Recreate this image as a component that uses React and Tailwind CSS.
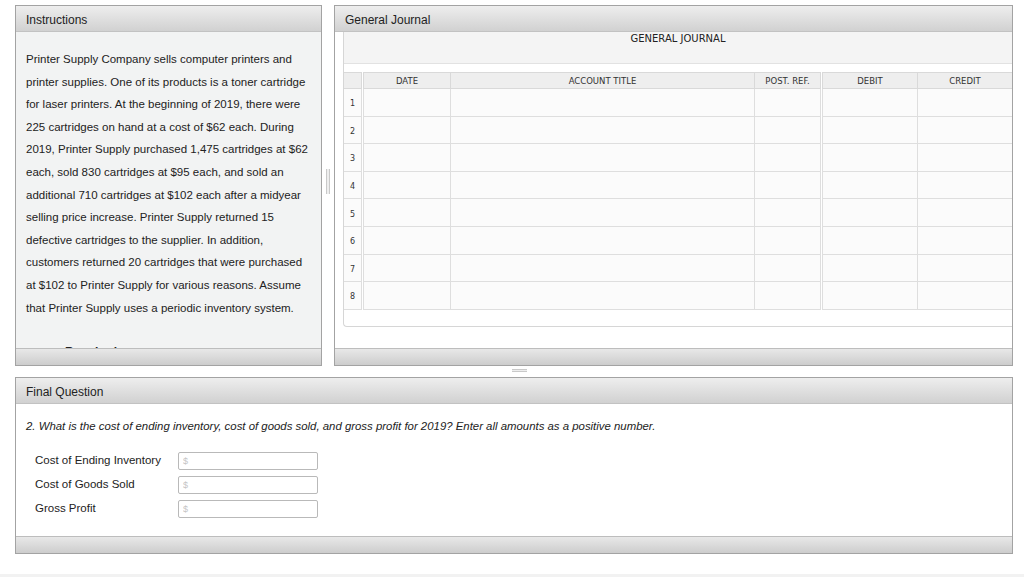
const paragraph =
  'Printer Supply Company sells computer printers and printer supplies. One of its products is a toner cartridge for laser printers. At the beginning of 2019, there were 225 cartridges on hand at a cost of $62 each. During 2019, Printer Supply purchased 1,475 cartridges at $62 each, sold 830 cartridges at $95 each, and sold an additional 710 cartridges at $102 each after a midyear selling price increase. Printer Supply returned 15 defective cartridges to the supplier. In addition, customers returned 20 cartridges that were purchased at $102 to Printer Supply for various reasons. Assume that Printer Supply uses a periodic inventory system.'

const fields = ['Cost of Ending Inventory', 'Cost of Goods Sold', 'Gross Profit']

const rows = [1, 2, 3, 4, 5, 6, 7, 8]

function PanelHeader({ children }) {
  return (
    <div className="h-[26px] shrink-0 flex items-center px-[10px] pt-[3px] bg-linear-to-b from-[#eeeeee] to-[#d1d1d1] border-b border-[#c2c2c2] text-[12px] text-[#222]">
      {children}
    </div>
  )
}

function PanelFooter() {
  return <div className="h-[17px] shrink-0 bg-linear-to-b from-[#e8e8e8] to-[#cdcdcd] border-t border-[#bdbdbd]" />
}

function JournalRow({ head, n }) {
  const cell = head
    ? 'h-[17px] bg-[#eeeeee] border-t border-b border-r border-[#d9d9d9] flex items-center justify-center pt-[2px] text-[8.5px] text-[#333]'
    : 'h-[27.6px] bg-[#fbfbfb] border-b border-r border-[#dedede]'
  return (
    <div className="flex">
      <div className={`w-[18px] ${cell} ${head ? '' : 'flex items-center justify-center pt-[4px] text-[8px] text-[#333]'}`}>{head ? '' : n}</div>
      <div className={`w-[88px] ml-[1px] border-l ${cell}`}>{head ? 'DATE' : ''}</div>
      <div className={`w-[304px] ${cell}`}>{head ? 'ACCOUNT TITLE' : ''}</div>
      <div className={`w-[66px] ${cell}`}>{head ? 'POST. REF.' : ''}</div>
      <div className={`w-[96px] ml-[1px] border-l ${cell}`}>{head ? 'DEBIT' : ''}</div>
      <div className={`flex-1 ${cell} border-r-0`}>{head ? 'CREDIT' : ''}</div>
    </div>
  )
}

export default function App() {
  return (
    <div className="w-[1024px] h-[577px] bg-white flex flex-col font-['Liberation_Sans',Arial,sans-serif] overflow-hidden">
      <div className="flex pl-[15px] pt-[5px]">
        {/* Instructions */}
        <div className="w-[307px] h-[361px] flex flex-col border border-[#a3a3a3] bg-[#f2f3f3]">
          <PanelHeader>Instructions</PanelHeader>
          <div className="flex-1 overflow-hidden pl-[10px] pr-[12px] pt-[16px]">
            <p className="text-[11.5px] leading-[22.6px] text-[#222]">{paragraph}</p>
            <p className="mt-[24px] pl-[39px] text-[12px] font-bold text-[#222]">Required:</p>
          </div>
          <PanelFooter />
        </div>

        {/* vertical splitter */}
        <div className="w-[12px] flex items-center justify-center">
          <div className="w-[4px] h-[25px] border-x border-[#c9c9c9] bg-[#eeeeee] -mt-[8px]" />
        </div>

        {/* General Journal */}
        <div className="w-[679px] h-[361px] flex flex-col border border-[#a3a3a3] bg-white">
          <PanelHeader>General Journal</PanelHeader>
          <div className="flex-1 pl-[8px]">
            <div className="h-[295px] border-l border-b border-[#d6d6d6] rounded-bl-[4px] font-['DejaVu_Sans',Verdana,sans-serif]">
              <div className="h-[32px] bg-[#f4f4f4] border-b border-[#e2e2e2] text-center text-[10px] leading-[12px] pt-[1px] text-[#222]">
                GENERAL JOURNAL
              </div>
              <div className="h-[8px]" />
              <JournalRow head />
              {rows.map((n) => (
                <JournalRow key={n} n={n} />
              ))}
            </div>
          </div>
          <PanelFooter />
        </div>
      </div>

      {/* horizontal splitter */}
      <div className="h-[11px] flex justify-center pl-[14px]">
        <div className="w-[15px] h-[3px] mt-[3px] border-y border-[#c9c9c9] bg-[#eeeeee]" />
      </div>

      {/* Final Question */}
      <div className="ml-[15px] w-[998px] h-[177px] flex flex-col border border-[#a3a3a3] bg-white">
        <PanelHeader>Final Question</PanelHeader>
        <div className="flex-1 px-[10px] pt-[15px]">
          <p className="text-[11.4px] leading-[14px] italic text-[#222]">
            2. What is the cost of ending inventory, cost of goods sold, and gross profit for 2019? Enter all amounts as a positive number.
          </p>
          <div className="mt-[19px] pl-[9px] flex flex-col gap-[6px]">
            {fields.map((f) => (
              <div key={f} className="flex items-center">
                <div className="w-[143px] text-[11.5px] text-[#222]">{f}</div>
                <input
                  placeholder="$"
                  className="w-[140px] h-[18px] border border-[#b9b9b9] rounded-[2px] px-[4px] text-[9px] placeholder:text-[#c5c5c5] outline-none"
                />
              </div>
            ))}
          </div>
        </div>
        <PanelFooter />
      </div>

      <div className="flex-1" />
      <div className="h-[3px] bg-[#f2f2f2]" />
    </div>
  )
}
